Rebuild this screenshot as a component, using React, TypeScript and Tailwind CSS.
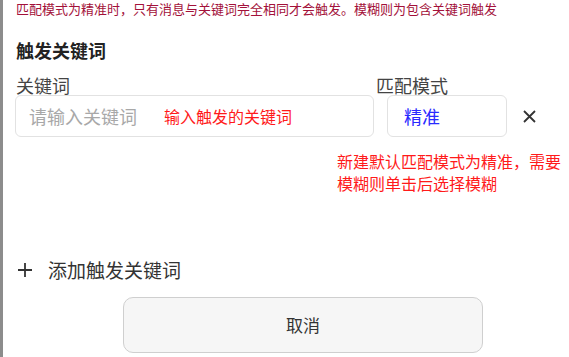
export default function App() {
  return (
    <div
      className="flex h-[357px] w-[569px] overflow-hidden bg-white text-[#333]"
      style={{ fontFamily: '"Noto Sans CJK SC", "Liberation Sans", sans-serif' }}
    >
      <div className="w-[3px] shrink-0 bg-[#8c8c8c]" />
      <div className="flex flex-1 flex-col">
        <div className="flex h-[287px] w-[555px]">
          <div className="flex-1 pl-[12px]">
            <p className="pl-[1px] pt-[1px] text-[13px] leading-[16px] text-[#a3113a]">
              匹配模式为精准时，只有消息与关键词完全相同才会触发。模糊则为包含关键词触发
            </p>
            <h3 className="mt-[21px] pl-[1px] text-[18px] font-bold leading-[24px] text-[#222]">触发关键词</h3>
            <div className="mt-[13px] flex text-[18px] leading-[20px] text-[#444]">
              <span className="w-[361px] pl-[1px]">关键词</span>
              <span>匹配模式</span>
            </div>
            <div className="flex items-center">
              <div className="flex h-[42px] w-[359px] items-center rounded-[6px] border border-[#e2e2e2] pl-[13px]">
                <span className="text-[18px] text-[#a8a8a8]">请输入关键词</span>
                <span className="ml-[27px] text-[16px] text-[#ff1a1a]">输入触发的关键词</span>
              </div>
              <div className="ml-[13px] flex h-[42px] w-[120px] items-center rounded-[6px] border border-[#e2e2e2] pl-[16px]">
                <span className="text-[18px] text-[#2a2aff]">精准</span>
              </div>
              <svg className="ml-[16px]" width="13" height="13" viewBox="0 0 13 13">
                <path d="M1 1 L12 12 M12 1 L1 12" stroke="#333" strokeWidth="1.8" fill="none" />
              </svg>
            </div>
            <p className="ml-[322px] mt-[13px] whitespace-nowrap text-[16px] leading-[22px] text-[#ff1a1a]">
              新建默认匹配模式为精准，需要
              <br />
              模糊则单击后选择模糊
            </p>
            <div className="mt-[64px] flex items-center">
              <svg className="ml-[3px]" width="14" height="14" viewBox="0 0 14 14">
                <path d="M7 0 V14 M0 7 H14" stroke="#333" strokeWidth="1.8" fill="none" />
              </svg>
              <span className="ml-[16px] text-[19px] leading-[24px] text-[#333]">添加触发关键词</span>
            </div>
          </div>
          <div className="w-2 bg-[#ededed]" />
        </div>
        <div className="pl-[120px] pt-[10px]">
          <button className="flex h-[56px] w-[360px] items-center justify-center rounded-[10px] border border-[#cfcfcf] bg-[#f6f6f6] text-[17px] text-[#333]">
            取消
          </button>
        </div>
      </div>
    </div>
  );
}
